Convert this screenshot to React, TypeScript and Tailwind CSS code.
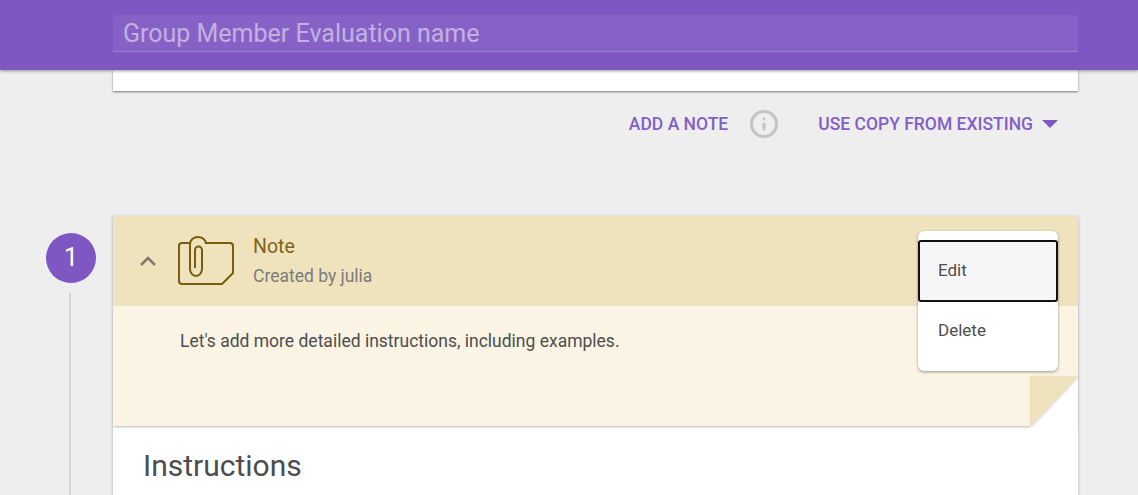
import { Info } from "lucide-react";

function NoteIcon() {
  return (
    <svg width="56" height="50" viewBox="0 0 56 50" fill="none" stroke="#7a5c0c" strokeWidth="2" className="shrink-0">
      <path d="M12 7H4a3 3 0 0 0-3 3v35a3 3 0 0 0 3 3h40l11-11V10a3 3 0 0 0-3-3H28" />
      <path d="M12 8V33a6 7 0 0 0 12 0V14a3.500 3.500 0 0 0-7 0V32" />
      <path d="M12 8a8 7 0 0 1 16 0" />
    </svg>
  );
}

export default function App() {
  return (
    <div className="h-[495px] overflow-hidden bg-[#eeeeee] font-['Roboto',sans-serif]">
      <header className="relative z-10 h-[70px] bg-[#7e57c2] pl-[113px] pr-[60px] pt-[15px] shadow-[0_1px_3px_rgba(0,0,0,0.4)]">
        <div className="flex h-[37px] items-center rounded-t border-b border-white/20 bg-white/[0.07] px-[10px] pt-[2px] text-[25px] text-white/50">
          Group Member Evaluation name
        </div>
      </header>

      <div className="ml-[113px] mr-[60px] h-[21px] bg-white shadow-[0_1px_2px_rgba(0,0,0,0.5)]" />

      <div className="mr-[60px] mt-[17px] flex h-[32px] items-center justify-end text-[17.500px] font-medium text-[#835fc6]">
        <span>ADD A NOTE</span>
        <Info className="ml-[21px] h-[30px] w-[30px] text-[#c4c4c4]" strokeWidth={2.5} />
        <span className="ml-[39px]">USE COPY FROM EXISTING</span>
        <span className="ml-[9px] mr-[20px] h-0 w-0 border-x-[8px] border-t-[8px] border-x-transparent border-t-[#7e57c2]" />
      </div>

      <div className="mt-[76px] flex">
        <div className="flex w-[113px] shrink-0 flex-col items-start pl-[46px]">
          <div className="mt-[17px] flex h-[50px] w-[50px] shrink-0 items-center justify-center rounded-full bg-[#7e57c2] text-[25px] text-white">
            1
          </div>
          <div className="ml-[23px] mt-[10px] h-[300px] w-[2px] shrink-0 bg-[#d6d6d6]" />
        </div>

        <div className="relative mr-[60px] flex-1 bg-white shadow-[0_1px_3px_rgba(0,0,0,0.3)]">
          <div className="flex h-[90px] items-center bg-[#efe3bd]">
            <svg width="20" height="20" viewBox="0 0 20 20" fill="none" stroke="#7d7a6c" strokeWidth="2.500" className="ml-[25px] shrink-0">
              <path d="M3 14l7-7 7 7" />
            </svg>
            <div className="ml-[20px]">
              <NoteIcon />
            </div>
            <div className="ml-[19px]">
              <div className="text-[19.500px] leading-[24px] text-[#806418]">Note</div>
              <div className="mt-[5px] text-[17.500px] leading-[24px] text-[#7b7b7b]">Created by julia</div>
            </div>
          </div>

          <div className="relative h-[120px] bg-[#fbf4e4] pl-[67px] pt-[23px] text-[17.500px] leading-[24px] text-[#4d4d4d] shadow-[0_2px_2px_-1px_rgba(0,0,0,0.28)]">
            Let's add more detailed instructions, including examples.
            <div className="absolute bottom-[-6px] right-0 h-[56px] w-[48px] bg-white">
              <div className="[filter:drop-shadow(1px_1px_1px_rgba(0,0,0,0.15))]">
                <div className="h-[51px] w-full bg-[#efe3bd] [clip-path:polygon(0_0,100%_0,0_100%)]" />
              </div>
            </div>
          </div>

          <h2 className="pl-[30px] pt-[20px] text-[30px] leading-[40px] text-[#4d4d4d]">Instructions</h2>

          <div className="absolute left-[805px] top-[15px] z-20 h-[140px] w-[140px] rounded-[6px] bg-white pt-[9px] text-[17px] text-[#4d4d4d] shadow-[0_1px_3px_rgba(0,0,0,0.4)]">
            <div className="flex h-[62px] items-center rounded-[3px] border-2 border-[#111111] bg-[#f6f6f6] pl-[18px]">Edit</div>
            <div className="flex h-[58px] items-center pl-[20px]">Delete</div>
          </div>
        </div>
      </div>
    </div>
  );
}
